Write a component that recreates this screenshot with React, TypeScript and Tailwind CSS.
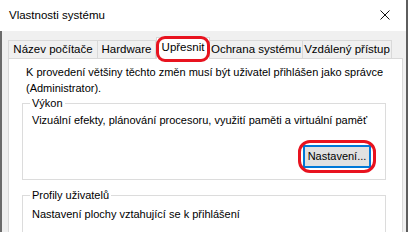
import React from 'react';

const segoe = "font-['Liberation_Sans','Noto_Sans',sans-serif]";
const sans = "font-['Liberation_Sans','DejaVu_Sans',sans-serif]";

type Tab = { label: string; width: string; selected?: boolean };

const tabs: Tab[] = [
  { label: 'Název počítače', width: 'w-[90px] border-l' },
  { label: 'Hardware', width: 'w-[58px]' },
  { label: 'Upřesnit', width: 'w-[54px]', selected: true },
  { label: 'Ochrana systému', width: 'w-[93px]' },
  { label: 'Vzdálený přístup', width: 'w-[89px]' },
];

// Red marker drawn over the highlighted controls
const Marker: React.FC<{ className: string }> = ({ className }) => (
  <span className={`pointer-events-none absolute border-[3px] border-[#e8131f] ${className}`} />
);

const GroupBox: React.FC<{ title: string; children: React.ReactNode; className?: string }> = ({
  title,
  children,
  className = '',
}) => (
  <fieldset className={`ml-[13px] w-[364px] border border-[#dcdcdc] ${className}`}>
    <legend className={`ml-[7px] px-[2px] text-[11px] leading-[13px] text-black ${sans}`}>{title}</legend>
    {children}
  </fieldset>
);

export default function App() {
  return (
    <div className="flex h-[232px] w-[412px] overflow-hidden bg-white">
      <div className="flex h-full w-[408px] flex-col border-r-2 border-[#5e5e5e]">
        {/* title bar */}
        <div className="flex h-[31px] shrink-0 items-center justify-between bg-white pl-[9px] pr-[16px]">
          <span className={`text-[11.5px] text-black ${segoe}`}>Vlastnosti systému</span>
          <svg width="10" height="10" viewBox="0 0 10 10" className="mt-[-1px]">
            <path d="M0.5 0.5 L9.5 9.5 M9.5 0.5 L0.5 9.5" stroke="#111" strokeWidth="1" />
          </svg>
        </div>

        {/* dialog body */}
        <div className="flex flex-1 flex-col border-l-2 border-[#6b6b6b] bg-[#f0f0f0] pl-[6px] pr-[3px] pt-[6px]">
          <div className="flex h-[21px] items-end">
            {tabs.map((t) =>
              t.selected ? (
                <div
                  key={t.label}
                  className={`relative z-10 -mb-px flex h-[22px] ${t.width} items-center justify-center whitespace-nowrap border border-b-0 border-[#d9d9d9] bg-white pb-[2px] text-[11.5px] text-black ${segoe}`}
                >
                  {t.label}
                  <Marker className="-inset-x-[1px] -top-[2px] bottom-[-3px] rounded-[9px]" />
                </div>
              ) : (
                <div
                  key={t.label}
                  className={`flex h-[18px] ${t.width} items-center justify-center whitespace-nowrap border-r border-t border-[#d9d9d9] bg-[#f0f0f0] text-[11.5px] text-black ${segoe}`}
                >
                  {t.label}
                </div>
              )
            )}
          </div>

          <div className="flex-1 border border-[#d9d9d9] bg-white pt-[5px]">
            <p className={`whitespace-nowrap pl-[17px] text-[11px] leading-[16px] text-black ${segoe}`}>
              K provedení většiny těchto změn musí být uživatel přihlášen jako správce
              <br />
              (Administrator).
            </p>

            <GroupBox title="Výkon" className="mt-[1px] h-[83px]">
              <div className="flex h-full flex-col pl-[9px] pr-[14px] pt-[4px]">
                <p className={`text-[11px] leading-[13px] text-black ${sans}`}>
                  Vizuální efekty, plánování procesoru, využití paměti a virtuální paměť
                </p>
                <div className="mt-[18px] flex justify-end">
                  <button
                    className={`relative h-[23px] w-[68px] border-2 border-[#0078d7] bg-[#e1e1e1] text-[11px] text-black ${sans}`}
                  >
                    Nastavení...
                    <Marker className="-inset-x-[7px] -inset-y-[7px] rounded-[12px]" />
                  </button>
                </div>
              </div>
            </GroupBox>

            <GroupBox title="Profily uživatelů" className="mt-[9px] h-[60px]">
              <div className="pl-[9px] pt-[6px]">
                <p className={`text-[11px] leading-[13px] text-black ${sans}`}>
                  Nastavení plochy vztahující se k přihlášení
                </p>
              </div>
            </GroupBox>
          </div>
        </div>
      </div>
    </div>
  );
}
